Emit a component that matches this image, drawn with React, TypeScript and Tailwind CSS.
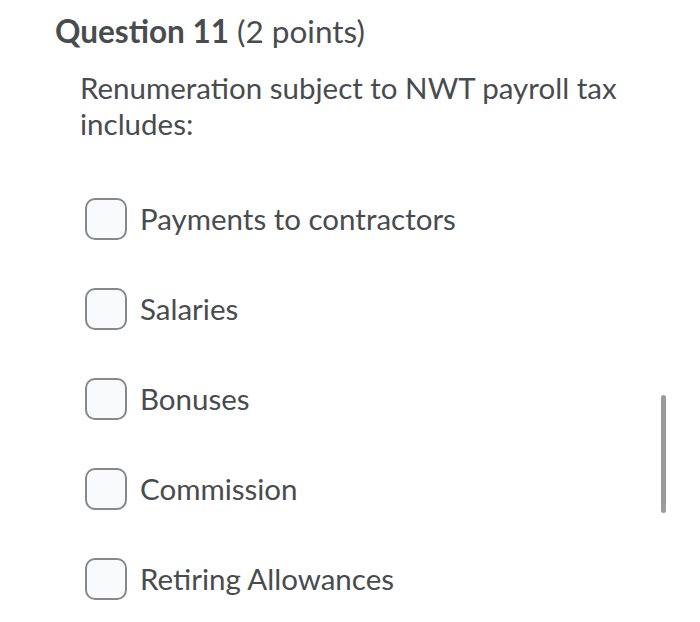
import React from "react";

const options = [
  "Payments to contractors",
  "Salaries",
  "Bonuses",
  "Commission",
  "Retiring Allowances",
];

export default function App() {
  return (
    <div
      className="relative w-[700px] h-[622px] bg-white text-[#494c4e] overflow-hidden"
      style={{ fontFamily: "Lato, 'Noto Sans', sans-serif" }}
    >
      <div className="pl-[55px] pt-[11px]">
        <h1 className="text-[31.5px] leading-[40px]">
          <span className="font-bold">Question 11</span>{" "}
          <span className="font-normal">(2 points)</span>
        </h1>
        <p className="pl-[25px] pt-[19px] text-[29.5px] leading-[36px] w-[600px]">
          Renumeration subject to NWT payroll tax includes:
        </p>
        <div className="pl-[30px] pt-[56px] flex flex-col gap-[48px]">
          {options.map((o) => (
            <label key={o} className="flex items-center gap-[13px] h-[42px]">
              <span className="w-[42px] h-[42px] rounded-[10px] border-2 border-[#888888] bg-[#f9fafc] shrink-0" />
              <span className="text-[29.5px] leading-[36px]">{o}</span>
            </label>
          ))}
        </div>
      </div>
      <div className="absolute left-[661px] top-[395px] w-[5px] h-[118px] rounded-full bg-[#9b9b9b]" />
    </div>
  );
}
